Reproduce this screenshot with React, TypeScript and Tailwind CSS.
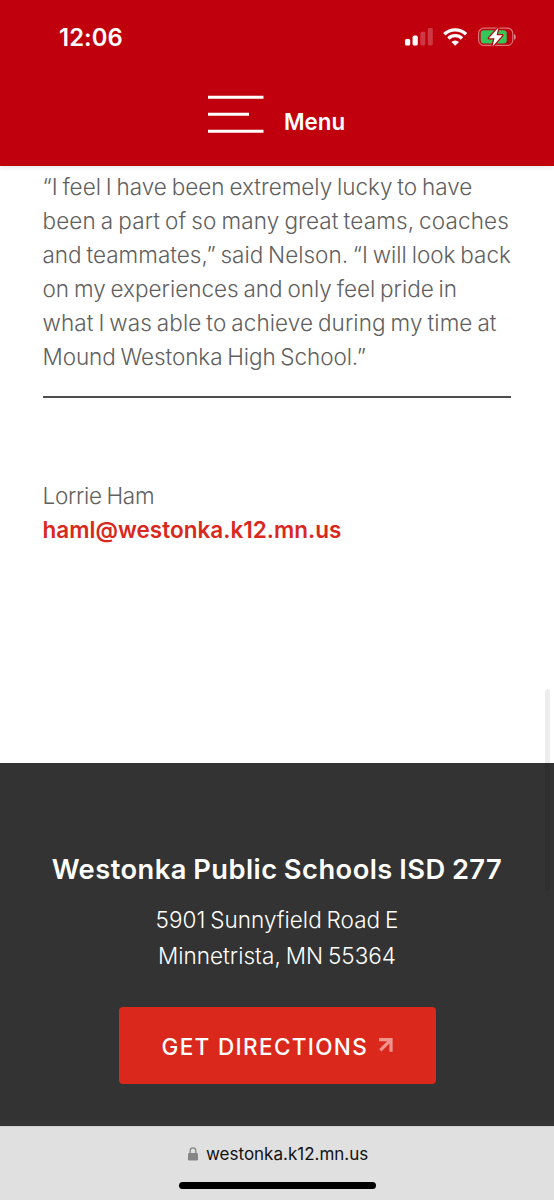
function StatusIcons() {
  return (
    <svg width="112" height="22" viewBox="404 26 112 22" fill="none" aria-hidden="true">
      <g fill="#fff">
        <rect x="405" y="39" width="5.2" height="6.5" rx="1.6" />
        <rect x="412.6" y="35.6" width="5.2" height="9.9" rx="1.6" />
        <rect x="420.3" y="31.8" width="5" height="13.7" rx="1.4" opacity=".22" />
        <rect x="427.8" y="28" width="5" height="17.5" rx="1.4" opacity=".22" />
      </g>
      <g stroke="#fff" strokeWidth="3.3">
        <path d="M444.3 34.3a15.6 15.6 0 0 1 21.8 0" />
        <path d="M448.4 38.5a9.7 9.7 0 0 1 13.6 0" />
      </g>
      <path d="M451.4 42.1a5.5 5.5 0 0 1 7.6 0l-3.8 3.7z" fill="#fff" />
      <rect x="478.6" y="28.2" width="34.2" height="17.2" rx="5.2" stroke="#fff" strokeOpacity=".45" strokeWidth="1.2" />
      <path d="M514 34v5.8c1.1-.5 1.9-1.6 1.9-2.9s-.8-2.4-1.9-2.9z" fill="#fff" fillOpacity=".5" />
      <rect x="480.7" y="30.2" width="26" height="13.2" rx="3.2" fill="#34c759" />
      <path
        d="M498.4 27.6 488.8 38.2h5.7l-2 8.2 10-11.1h-5.9z"
        fill="#fff"
        stroke="#c0000d"
        strokeWidth="2.4"
        strokeLinejoin="round"
        paintOrder="stroke"
      />
    </svg>
  );
}

function Header() {
  return (
    <header className="relative z-10 h-[166px] shrink-0 bg-[#c0000d] text-white shadow-[0_1px_5px_rgba(0,0,0,0.12)]">
      <div className="flex h-[74px] items-center justify-between pr-[38px] pl-[59px]">
        <span className="pt-px text-[23.8px] leading-[30px] font-[580] tracking-[0.1px]">12:06</span>
        <StatusIcons />
      </div>
      <button className="ml-[208px] flex items-start">
        <svg width="56" height="38" viewBox="0 0 56 38" className="mt-[21px]" aria-hidden="true">
          <path d="M0 2.2h55.5M0 19.2h41M0 36.3h55.5" stroke="#fff" strokeWidth="3" />
        </svg>
        <span className="mt-[33px] ml-5 text-[22.3px] leading-[30px] font-[580]">Menu</span>
      </button>
    </header>
  );
}

function Article() {
  return (
    <main className="h-[597px] shrink-0 pt-1 pr-[43.5px] pl-[42.5px] text-[22.5px] leading-[34px] font-[320] [word-spacing:-1.5px] whitespace-nowrap text-[#606060]">
      <p>
        <span className="block tracking-[0px]">“I feel I have been extremely lucky to have</span>
        <span className="block tracking-[0.13px]">been a part of so many great teams, coaches</span>
        <span className="block tracking-[0px]">and teammates,” said Nelson. “I will look back</span>
        <span className="block tracking-[0px]">on my experiences and only feel pride in</span>
        <span className="block tracking-[0.09px]">what I was able to achieve during my time at</span>
        <span className="block tracking-[-0.08px]">Mound Westonka High School.”</span>
      </p>
      <hr className="mt-[22px] h-0.5 border-0 bg-[#4c4d4f]" />
      <p className="mt-[81px] tracking-[-0.27px]">Lorrie Ham</p>
      <a href="mailto:haml@westonka.k12.mn.us" className="block font-semibold tracking-[0.02px] text-[#d9281d]">
        haml@westonka.k12.mn.us
      </a>
    </main>
  );
}

function Footer() {
  return (
    <footer className="flex h-[363px] shrink-0 flex-col items-center bg-[#333] pt-[89px] whitespace-nowrap text-white">
      <h2 className="text-[27.3px] leading-9 font-semibold tracking-[0.46px] [word-spacing:-1px]">Westonka Public Schools ISD 277</h2>
      <address className="mt-3.5 text-center text-[22.5px] leading-9 font-light tracking-[0.03px] [word-spacing:-1.5px] not-italic">
        5901 Sunnyfield Road E
        <br />
        Minnetrista, MN 55364
      </address>
      <a href="#directions" className="mt-[33.3px] flex h-[77px] w-[317px] items-center rounded-[4px] bg-[#da291c] pl-[43px]">
        <span className="mt-0.5 text-[22.5px] leading-[30px] font-[540] tracking-[1.35px]">GET DIRECTIONS</span>
        <svg width="14" height="14" viewBox="0 0 14 14" className="-mt-[2px] ml-[11px]" fill="none" aria-hidden="true">
          <path d="M0 1.7h12v12M11.5 2.2 1.3 12.4" stroke="#f1948d" strokeWidth="3.2" />
        </svg>
      </a>
    </footer>
  );
}

function AddressBar() {
  return (
    <div className="h-[74px] shrink-0 border-t border-[#d2d2d2] bg-[#e0e0e0] pt-[16px]">
      <div className="flex items-center pl-[188px] text-[17px] leading-[22px] text-[#111]">
        <svg width="10" height="14" viewBox="0 0 10 14" fill="none" aria-hidden="true">
          <rect y="6" width="10" height="7.6" rx="1.4" fill="#858585" />
          <path d="M2.2 6.5V3.7a2.8 2.8 0 0 1 5.6 0v2.8" stroke="#858585" strokeWidth="1.3" />
        </svg>
        <span className="ml-2">westonka.k12.mn.us</span>
      </div>
      <div className="mx-auto mt-[16.5px] h-[7px] w-[197px] rounded-full bg-black" />
    </div>
  );
}

export default function App() {
  return (
    <div className="relative flex h-[1200px] w-[554px] flex-col overflow-hidden bg-white font-[Inter,sans-serif]">
      <Header />
      <Article />
      <Footer />
      <AddressBar />
      <div className="absolute top-[689px] right-1 h-[202px] w-[5px] rounded-full bg-black/7" />
    </div>
  );
}
